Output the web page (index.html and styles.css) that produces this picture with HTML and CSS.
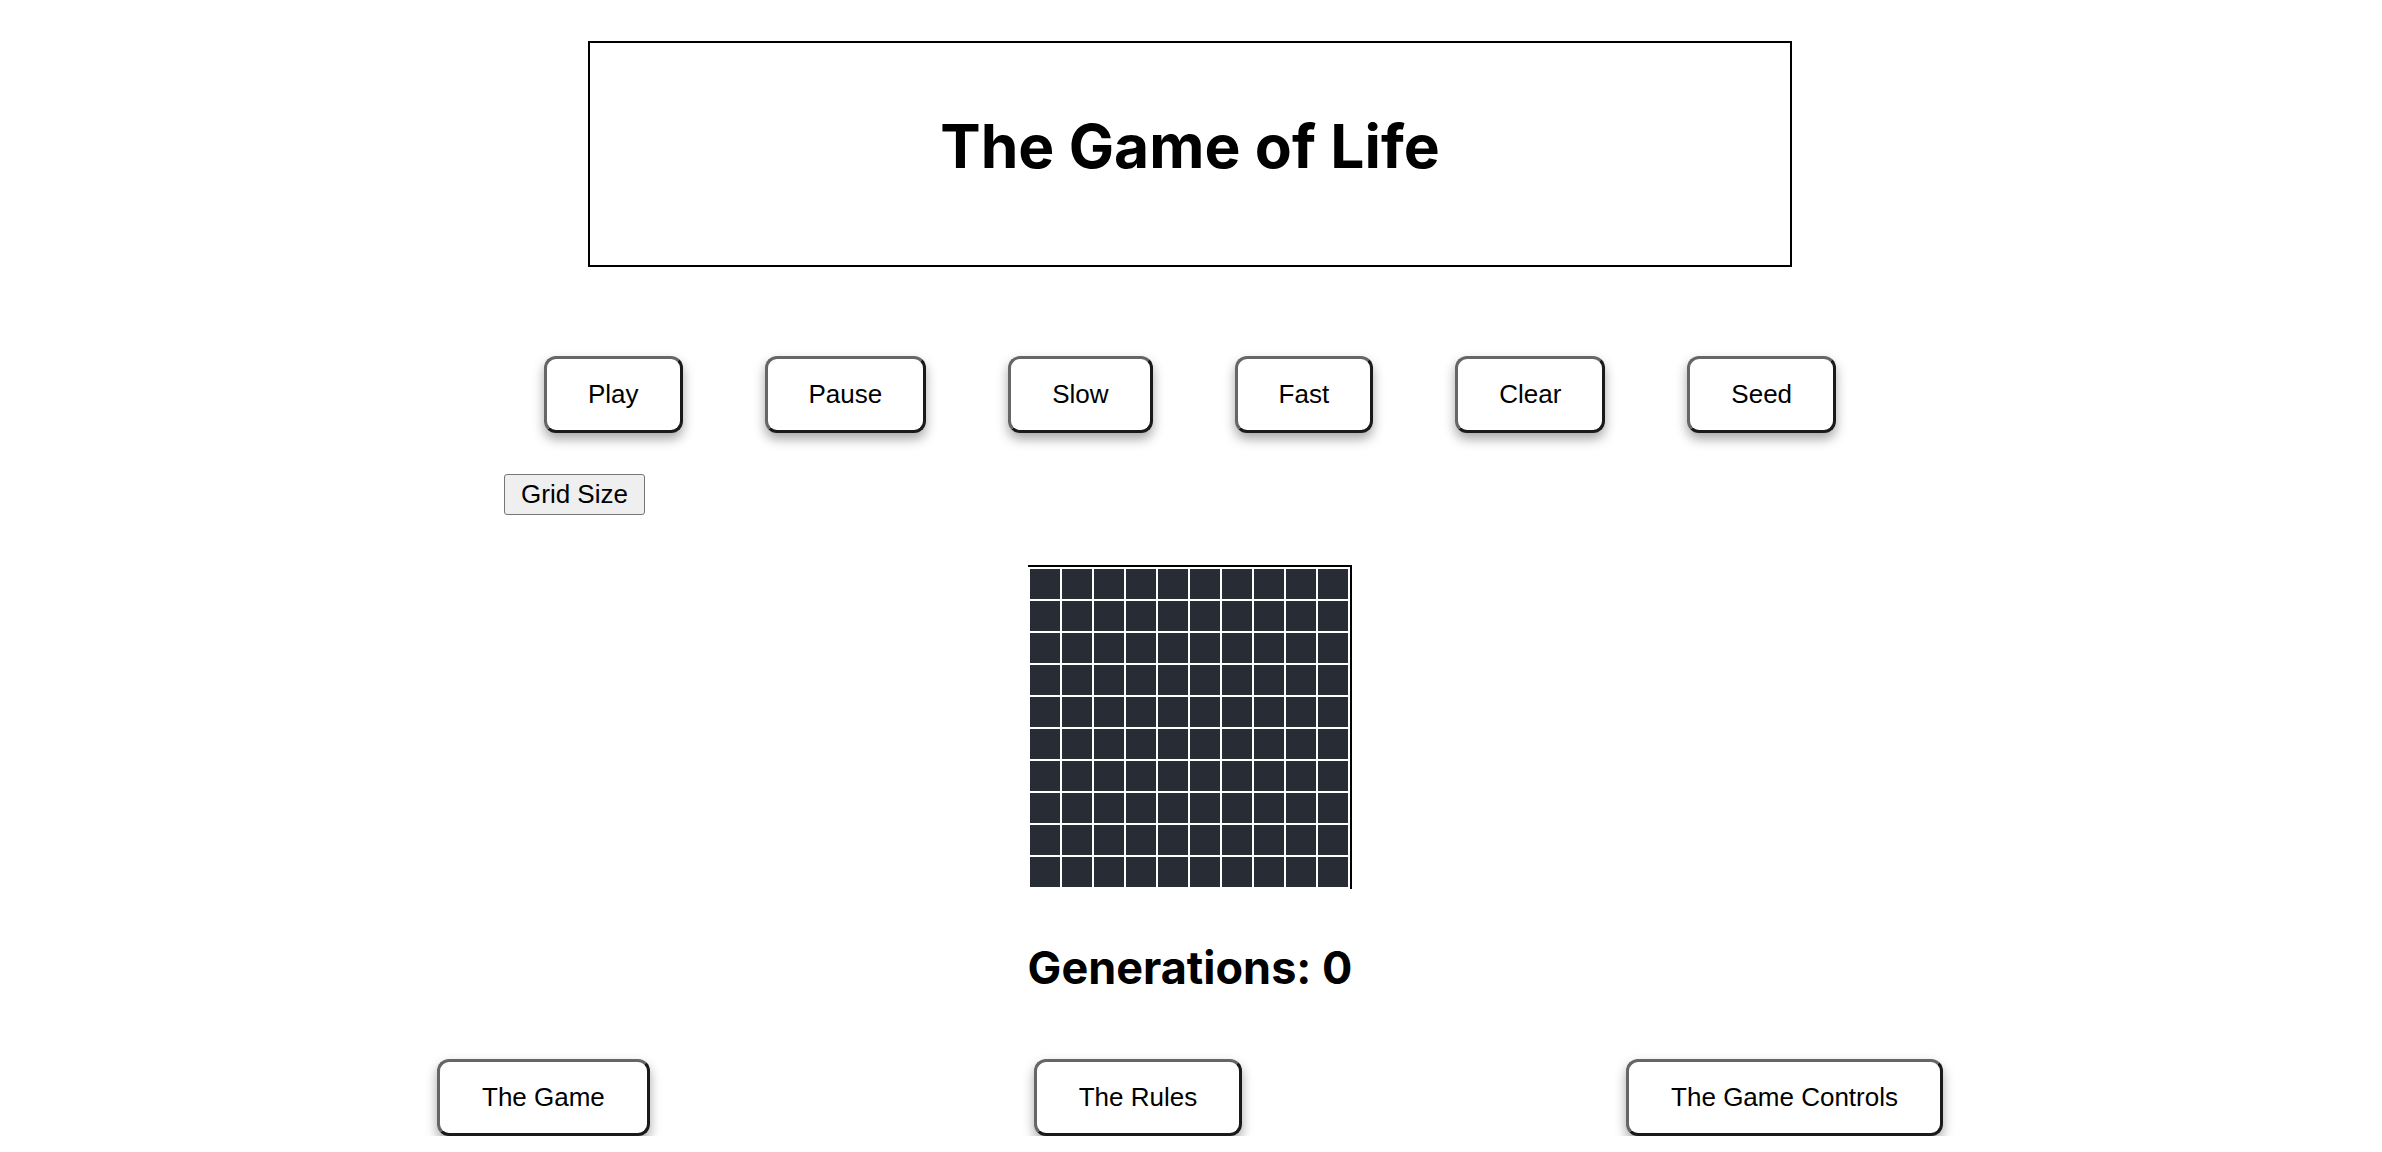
FILE: index.html
```html
<!DOCTYPE html>
<html lang="en">
<head>
<meta charset="utf-8">
<title>The Game of Life</title>
<link rel="stylesheet" href="styles.css">
</head>
<body>
<div class="page">
  <header class="title-box">
    <h1 class="title">The Game of Life</h1>
  </header>

  <div class="controls">
    <button class="ctl">Play</button>
    <button class="ctl">Pause</button>
    <button class="ctl">Slow</button>
    <button class="ctl">Fast</button>
    <button class="ctl">Clear</button>
    <button class="ctl">Seed</button>
  </div>

  <div class="size-row">
    <button class="size-btn">Grid Size</button>
  </div>

  <div class="board" id="board"></div>

  <h2 class="generations">Generations: 0</h2>

  <div class="info-row">
    <button class="ctl ctl-info">The Game</button>
    <button class="ctl ctl-info">The Rules</button>
    <button class="ctl ctl-info">The Game Controls</button>
  </div>
</div>
<script>
  var b = document.getElementById('board');
  for (var i = 0; i < 100; i++) {
    var c = document.createElement('div');
    c.className = 'cell';
    b.appendChild(c);
  }
</script>
</body>
</html>
```

FILE: styles.css
```css
html, body {
  margin: 0;
  padding: 0;
  background: #ffffff;
}

body {
  font-family: "Liberation Sans", Arial, sans-serif;
  color: #000;
}

.page {
  display: flex;
  flex-direction: column;
  align-items: center;
  padding-top: 41px;
  padding-right: 2px;
}

.title-box {
  width: 1200px;
  height: 222px;
  border: 2px solid #000;
}

.title {
  margin: 0;
  padding-top: 66px;
  text-align: center;
  font-family: Inter, "Noto Sans", sans-serif;
  font-weight: 700;
  font-size: 60.5px;
  line-height: 74px;
}

.controls {
  display: flex;
  gap: 82px;
  margin-top: 89px;
}

.ctl {
  font-family: "Liberation Sans", Arial, sans-serif;
  font-size: 26px;
  line-height: 31px;
  padding: 20px 41px;
  background: #fff;
  color: #000;
  border: 3px solid;
  border-color: #666666 #1a1a1a #1a1a1a #666666;
  border-radius: 12px;
  box-shadow: 0 6px 12px rgba(0, 0, 0, 0.35);
  cursor: pointer;
}

.ctl-info {
  padding: 20px 42px;
}

.size-row {
  align-self: stretch;
  display: flex;
  padding-left: 504px;
  margin-top: 41px;
}

.size-btn {
  font-family: "Liberation Sans", Arial, sans-serif;
  font-size: 26px;
  line-height: 31px;
  padding: 4px 16px;
  background: #efefef;
  color: #000;
  border: 1px solid #767676;
  border-radius: 3px;
}

.board {
  margin-top: 50px;
  display: grid;
  grid-template-columns: repeat(10, 30px);
  grid-auto-rows: 30px;
  gap: 2px;
  padding: 2px;
  background: #fff;
  border-top: 2px solid #000;
  border-right: 2px solid #000;
}

.cell {
  background: #282c34;
}

.generations {
  margin: 51px 0 0;
  font-family: Inter, "Noto Sans", sans-serif;
  font-weight: 700;
  font-size: 45px;
  line-height: 55px;
}

.info-row {
  width: 1506px;
  display: flex;
  justify-content: space-between;
  margin-top: 64px;
}
```
